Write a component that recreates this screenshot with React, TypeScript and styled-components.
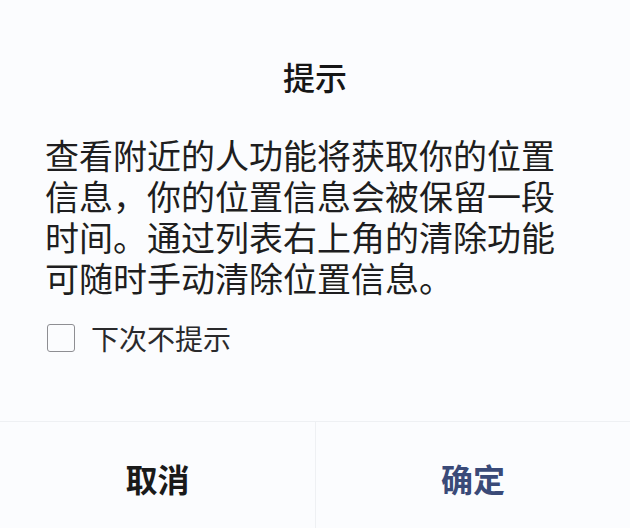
import React, { useState } from "react";
import styled, { createGlobalStyle } from "styled-components";

const Global = createGlobalStyle`
  html, body { margin: 0; padding: 0; background: #fbfcfe; }
  body { font-family: "Noto Sans CJK SC", "Noto Sans", sans-serif; color: #1c1c1e; }
`;

const Dialog = styled.div`
  width: 630px;
  height: 528px;
  display: flex;
  flex-direction: column;
  background: #fbfcfe;
  box-sizing: border-box;
`;

const Title = styled.div`
  margin-top: 56px;
  height: 40px;
  line-height: 40px;
  text-align: center;
  font-size: 32px;
  font-weight: 500;
  color: #161616;
`;

const Message = styled.p`
  margin: 38px 0 0 0;
  padding: 0 70px 0 45px;
  font-size: 34px;
  line-height: 41px;
  color: #1e1e20;
  letter-spacing: 0;
`;

const CheckRow = styled.label`
  display: flex;
  align-items: center;
  gap: 16px;
  margin: 25px 0 0 47px;
  height: 30px;
  cursor: pointer;
`;

const Box = styled.span<{ $checked: boolean }>`
  width: 28px;
  height: 28px;
  box-sizing: border-box;
  border: 1.5px solid #8e8e93;
  border-radius: 3px;
  background: ${(p) => (p.$checked ? "#3b4a7c" : "transparent")};
`;

const CheckLabel = styled.span`
  font-size: 28px;
  line-height: 30px;
  color: #2a2a2c;
`;

const Footer = styled.div`
  margin-top: auto;
  height: 106px;
  display: grid;
  grid-template-columns: 1fr 1fr;
  border-top: 1px solid #eef0f3;
`;

const Action = styled.button<{ $primary?: boolean }>`
  border: none;
  background: transparent;
  font-family: inherit;
  font-size: 32px;
  font-weight: 700;
  padding: 6px 0 0 0;
  color: ${(p) => (p.$primary ? "#3a4a78" : "#1a1a1a")};
  border-left: ${(p) => (p.$primary ? "1px solid #eef0f3" : "none")};
  cursor: pointer;
`;

export default function App() {
  const [checked, setChecked] = useState(false);
  return (
    <>
      <Global />
      <Dialog>
        <Title>提示</Title>
        <Message>
          查看附近的人功能将获取你的位置信息，你的位置信息会被保留一段时间。通过列表右上角的清除功能可随时手动清除位置信息。
        </Message>
        <CheckRow onClick={() => setChecked(!checked)}>
          <Box $checked={checked} />
          <CheckLabel>下次不提示</CheckLabel>
        </CheckRow>
        <Footer>
          <Action>取消</Action>
          <Action $primary>确定</Action>
        </Footer>
      </Dialog>
    </>
  );
}
